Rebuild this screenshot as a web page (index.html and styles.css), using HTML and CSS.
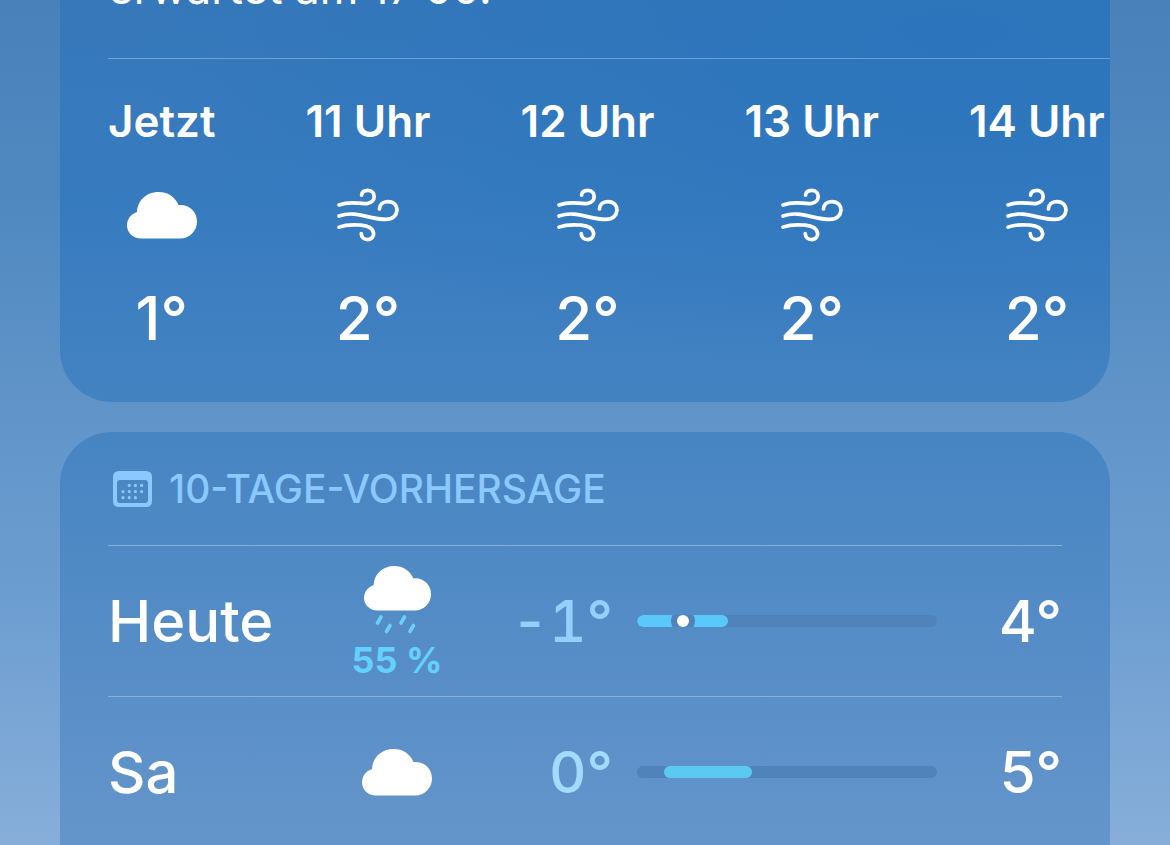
FILE: index.html
```html
<!DOCTYPE html>
<html lang="de">

<head>
    <meta charset="UTF-8">
    <meta name="viewport" content="width=device-width, initial-scale=1.0">
    <title>Wetter</title>
    <link rel="stylesheet" href="styles.css">
</head>

<body>
    <svg class="symbols" aria-hidden="true">
        <symbol id="cloud" viewBox="0 0 70 47">
            <path fill="currentColor" d="M14 46.5C6 46.5 0 40.5 0 33.5C0 27 4 22 10 20C10.5 8.5 19.5 0 31.5 0C40.5 0 48 4.5 51.5 13C62 12 70 19.5 70 29.5C70 39 62.5 46.5 53 46.5Z"/>
        </symbol>
        <symbol id="wind" viewBox="57 55 184 160">
            <g fill="none" stroke="currentColor" stroke-width="11" stroke-linecap="round">
                <path d="M63 105C100 92 120 103 146 101C175 98 173 62 149 62C138 62 131 67 130 76"/>
                <path d="M63 138C112 120 152 148 202 148C245 148 245 95 208 95C193 95 183 104 183 117"/>
                <path d="M63 171C90 161 112 164 128 165C177 169 172 208 148 208C137 208 129 201 129 190"/>
            </g>
        </symbol>
    </svg>

    <main>
        <section class="card hourly">
            <p class="summary">erwartet am 17:00.</p>
            <ul class="hours">
                <li>
                    <span class="hour">Jetzt</span>
                    <svg class="icon cloud" role="img" aria-label="Bewölkt"><use href="#cloud"/></svg>
                    <span class="temp">1°</span>
                </li>
                <li>
                    <span class="hour">11 Uhr</span>
                    <svg class="icon wind" role="img" aria-label="Windig"><use href="#wind"/></svg>
                    <span class="temp">2°</span>
                </li>
                <li>
                    <span class="hour">12 Uhr</span>
                    <svg class="icon wind" role="img" aria-label="Windig"><use href="#wind"/></svg>
                    <span class="temp">2°</span>
                </li>
                <li>
                    <span class="hour">13 Uhr</span>
                    <svg class="icon wind" role="img" aria-label="Windig"><use href="#wind"/></svg>
                    <span class="temp">2°</span>
                </li>
                <li>
                    <span class="hour">14 Uhr</span>
                    <svg class="icon wind" role="img" aria-label="Windig"><use href="#wind"/></svg>
                    <span class="temp">2°</span>
                </li>
            </ul>
        </section>

        <section class="card daily">
            <h2>
                <svg class="calendar" viewBox="0 0 39 36" aria-hidden="true">
                    <path fill="currentColor" fill-rule="evenodd" d="M6 0H33Q39 0 39 6V30Q39 36 33 36H6Q0 36 0 30V6Q0 0 6 0ZM7 9Q4 9 4 12V29Q4 32 7 32H32Q35 32 35 29V12Q35 9 32 9Z"/>
                    <g fill="currentColor">
                        <circle cx="16.2" cy="14.4" r="1.6"/><circle cx="22.4" cy="14.4" r="1.6"/><circle cx="28.6" cy="14.4" r="1.6"/>
                        <circle cx="10" cy="20.6" r="1.6"/><circle cx="16.2" cy="20.6" r="1.6"/><circle cx="22.4" cy="20.6" r="1.6"/><circle cx="28.6" cy="20.6" r="1.6"/>
                        <circle cx="10" cy="26.7" r="1.6"/><circle cx="16.2" cy="26.7" r="1.6"/><circle cx="22.4" cy="26.7" r="1.6"/>
                    </g>
                </svg>
                10-TAGE-VORHERSAGE
            </h2>
            <ul class="days">
                <li>
                    <span class="day">Heute</span>
                    <span class="weather">
                        <svg class="rain" viewBox="0 -6 67 78" role="img" aria-label="Regen">
                            <use href="#cloud" width="67" height="45"/>
                            <path stroke="#6ad0fa" stroke-width="3.6" stroke-linecap="round" d="M17 51L13.500 57M26 59.500L22.500 65.500M40.500 51L37 57M49.500 59.500L46 65.500"/>
                        </svg>
                        <span class="chance">55 %</span>
                    </span>
                    <span class="low">-1°</span>
                    <span class="range">
                        <span class="fill" style="left: 0%; width: 30.3%"></span>
                        <span class="now" style="left: 15.2%"></span>
                    </span>
                    <span class="high">4°</span>
                </li>
                <li>
                    <span class="day">Sa</span>
                    <span class="weather">
                        <svg class="cloud" role="img" aria-label="Bewölkt"><use href="#cloud"/></svg>
                    </span>
                    <span class="low mild">0°</span>
                    <span class="range">
                        <span class="fill mild" style="left: 9%; width: 29.3%"></span>
                    </span>
                    <span class="high">5°</span>
                </li>
            </ul>
        </section>
    </main>
</body>

</html>
```
FILE: styles.css
```css
* {
    box-sizing: border-box;
}

body {
    margin: 0;
    height: 100vh;
    overflow: hidden;
    background: linear-gradient(180deg, #4982ba 0%, #4f89c0 24%, #6094c8 47%, #6c9dd1 70%, #87aed9 100%);
    color: #fff;
    font-family: Inter, "Liberation Sans", sans-serif;
    font-weight: 500;
}

ul {
    list-style: none;
    margin: 0;
    padding: 0;
}

.symbols {
    position: absolute;
    width: 0;
    height: 0;
}

main {
    display: flex;
    flex-direction: column;
    gap: 30px;
    margin: -88px 60px 0;
}

.card {
    border-radius: 52px;
    overflow: hidden;
}

/* hourly forecast */
.hourly {
    padding: 49px 0 48px 48px;
    background: radial-gradient(ellipse at 85% 25%, rgba(36, 114, 188, 0.6), rgba(36, 114, 188, 0) 65%),
        linear-gradient(180deg, #3678ba 18%, #377bbf 60%, #4483c2 100%);
}

.summary {
    margin: 0;
    padding-bottom: 43px;
    font-size: 44px;
    font-weight: 400;
    line-height: 54px;
}

.hours {
    display: flex;
    gap: 90px;
    padding-top: 35px;
    border-top: 1px solid rgba(255, 255, 255, 0.3);
}

.hours li {
    display: flex;
    flex: none;
    flex-direction: column;
    align-items: center;
    gap: 40px;
}

.hour {
    font-size: 44px;
    font-weight: 600;
    line-height: 54px;
}

.cloud {
    width: 70px;
    height: 47px;
}

.wind {
    width: 62px;
    height: 54px;
}

.icon.cloud {
    margin: 4px 0 3px;
}

.temp {
    font-size: 60px;
    line-height: 72px;
}

/* daily forecast */
.daily {
    padding: 0 48px 48px;
    background: linear-gradient(180deg, #4684c2 0%, #4f8ac5 28%, #5b8fc8 60%, #6697cb 95%);
}

h2 {
    display: flex;
    align-items: center;
    gap: 17px;
    height: 113px;
    margin: 0;
    padding-left: 5px;
    color: #8ac8ff;
    font-size: 39px;
    font-weight: 500;
}

.calendar {
    width: 39px;
    height: 36px;
}

.days li {
    display: grid;
    grid-template-columns: 240px 98px 167px minmax(0, 1fr) 98px;
    align-items: center;
    height: 151px;
    border-top: 1px solid rgba(255, 255, 255, 0.3);
    font-size: 58px;
}

.weather {
    display: flex;
    flex-direction: column;
    align-items: center;
}

.rain {
    width: 67px;
    height: 78px;
}

.chance {
    color: #64d0fd;
    font-size: 36px;
    font-weight: 700;
    line-height: 44px;
    white-space: nowrap;
}

.low {
    color: #94d0ff;
    font-feature-settings: "calt" 0, "tnum" 1;
    text-align: right;
}

.low.mild {
    color: #a3daff;
}

.high {
    text-align: right;
}

.range {
    position: relative;
    height: 12px;
    margin: 0 27px 0 24px;
    border-radius: 6px;
    background: #4f83ba;
    overflow: hidden;
}

.fill {
    position: absolute;
    top: 0;
    bottom: 0;
    border-radius: 6px;
    background: #5bc8fa;
}

.fill.mild {
    background: #5bcaf2;
}

.now {
    position: absolute;
    top: 0;
    width: 12px;
    height: 12px;
    border-radius: 50%;
    background: #fff;
    box-shadow: 0 0 0 6px #4f83ba;
    transform: translateX(-50%);
}
```
